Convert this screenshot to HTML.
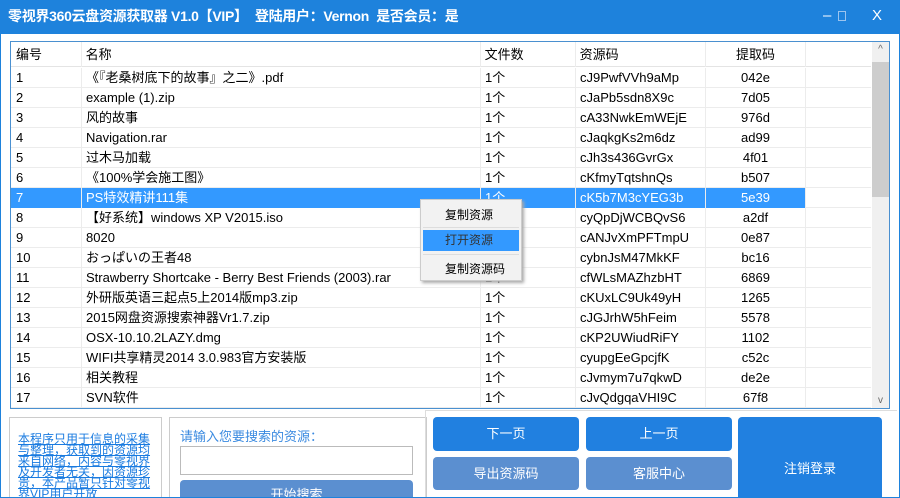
<!DOCTYPE html>
<html><head><meta charset="utf-8"><style>
*{margin:0;padding:0;box-sizing:border-box}
html,body{width:900px;height:498px;overflow:hidden}
body{background:#fff;font-family:"Liberation Sans","Noto Sans CJK SC",sans-serif;position:relative}
.title{position:absolute;left:0;top:0;width:900px;height:34px;background:#1e82dc;color:#fff;font-size:14px;font-weight:bold;line-height:32px;padding-left:8px;letter-spacing:-0.3px}
.wb{position:absolute;top:0;width:900px;height:498px;border:1px solid #1e82dc;border-top:none;pointer-events:none;left:0}
.ctl{position:absolute;top:0;color:#fff;font-size:15px;line-height:32px}
.grid{position:absolute;left:10px;top:41px;width:880px;height:368px;border:1px solid #4a90d0;overflow:hidden}
.row{position:absolute;left:0;height:20px;width:860px;border-bottom:1px solid #ececec;font-size:13px;line-height:20px;color:#000}
.row span{position:absolute;top:0;height:20px;white-space:nowrap;overflow:hidden}
.row .vl{border-left:1px solid #ececec}
.btn{position:absolute;border-radius:4px;color:#fff;font-size:13px;text-align:center}
.b1{background:#2180e0}.b2{background:#5b8fd0}
</style></head><body>
<div class="title">零视界360云盘资源获取器 V1.0【VIP】 &nbsp;登陆用户：Vernon &nbsp;是否会员：是</div>
<div class="ctl" style="left:823px">–</div>
<div style="position:absolute;left:838px;top:11px;width:8px;height:10px;border:1px solid #9cc4ee"></div>
<div class="ctl" style="left:872px">X</div>
<div class="grid">
<div class="row" style="top:0;height:25px;line-height:25px;border-bottom:1px solid #e4e4e4;background:#fff">
<span style="left:5px">编号</span><span style="left:70px;height:25px" class="vl">&nbsp;名称</span><span class="vl" style="left:469px;height:25px">&nbsp;文件数</span><span class="vl" style="left:564px;height:25px">&nbsp;资源码</span><span class="vl" style="left:694px;width:100px;text-align:center;height:25px">提取码</span><span class="vl" style="left:794px;height:25px;width:66px"></span></div>
<div id="rows"></div>
<div style="position:absolute;left:861px;top:0;width:17px;height:366px;background:#f0f0f0">
<div style="position:absolute;left:0;top:20px;width:17px;height:135px;background:#cdcdcd"></div>
<div style="position:absolute;top:2px;width:17px;text-align:center;font-size:10px;color:#666">^</div>
<div style="position:absolute;bottom:2px;width:17px;text-align:center;font-size:10px;color:#666">v</div></div>
</div>
<div style="position:absolute;left:420px;top:199px;width:102px;height:82px;background:#f2f2f2;border:1px solid #ccc;box-shadow:2px 2px 3px #aaa;font-size:12px">
<div style="position:absolute;left:24px;top:6px">复制资源</div>
<div style="position:absolute;left:2px;top:27px;width:96px;border-top:1px solid #ddd"></div>
<div style="position:absolute;left:2px;top:30px;width:96px;height:21px;background:#3399ff;color:#333;padding-left:22px;line-height:21px">打开资源</div>
<div style="position:absolute;left:2px;top:54px;width:96px;border-top:1px solid #ddd"></div>
<div style="position:absolute;left:24px;top:60px">复制资源码</div></div>
<div style="position:absolute;left:9px;top:417px;width:153px;height:90px;border:1px solid #ccc;background:#fff">
<div style="position:absolute;left:8px;top:16px;width:140px;font-size:12px;line-height:11px;color:#1a7be0;text-decoration:underline">本程序只用于信息的采集与整理，获取到的资源均来自网络，内容与零视界及开发者无关，因资源珍贵，本产品暂只针对零视界VIP用户开放</div></div>
<div style="position:absolute;left:169px;top:417px;width:258px;height:90px;border:1px solid #ccc;background:#fff">
<div style="position:absolute;left:10px;top:8px;font-size:13px;color:#3a8ae0">请输入您要搜索的资源：</div>
<div style="position:absolute;left:10px;top:28px;width:233px;height:29px;border:1px solid #bbb"></div>
<div class="btn b2" style="left:10px;top:62px;width:233px;height:30px;line-height:30px">开始搜索</div></div>
<div style="position:absolute;left:425px;top:410px;width:472px;height:90px;border:1px solid #ddd;border-right:none"></div>
<div class="btn b1" style="left:433px;top:417px;width:146px;height:34px;line-height:34px">下一页</div>
<div class="btn b1" style="left:586px;top:417px;width:146px;height:34px;line-height:34px">上一页</div>
<div class="btn b2" style="left:433px;top:457px;width:146px;height:33px;line-height:33px">导出资源码</div>
<div class="btn b2" style="left:586px;top:457px;width:146px;height:33px;line-height:33px">客服中心</div>
<div class="btn b1" style="left:738px;top:417px;width:144px;height:90px;line-height:104px">注销登录</div>
<div class="wb"></div>
<script>
var d=[["1","《『老桑树底下的故事』之二》.pdf","cJ9PwfVVh9aMp","042e"],["2","example (1).zip","cJaPb5sdn8X9c","7d05"],["3","风的故事","cA33NwkEmWEjE","976d"],["4","Navigation.rar","cJaqkgKs2m6dz","ad99"],["5","过木马加载","cJh3s436GvrGx","4f01"],["6","《100%学会施工图》","cKfmyTqtshnQs","b507"],["7","PS特效精讲111集","cK5b7M3cYEG3b","5e39"],["8","【好系统】windows XP V2015.iso","cyQpDjWCBQvS6","a2df"],["9","8020","cANJvXmPFTmpU","0e87"],["10","おっぱいの王者48","cybnJsM47MkKF","bc16"],["11","Strawberry Shortcake - Berry Best Friends (2003).rar","cfWLsMAZhzbHT","6869"],["12","外研版英语三起点5上2014版mp3.zip","cKUxLC9Uk49yH","1265"],["13","2015网盘资源搜索神器Vr1.7.zip","cJGJrhW5hFeim","5578"],["14","OSX-10.10.2LAZY.dmg","cKP2UWiudRiFY","1102"],["15","WIFI共享精灵2014 3.0.983官方安装版","cyupgEeGpcjfK","c52c"],["16","相关教程","cJvmym7u7qkwD","de2e"],["17","SVN软件","cJvQdgqaVHI9C","67f8"]];
var h="";d.forEach(function(r,i){var s=i==6;h+='<div class="row" style="top:'+(26+i*20)+'px"><span style="left:0;width:794px;'+(s?'background:#3399ff;':'')+'"></span><span style="left:5px;'+(s?'color:#fff':'')+'">'+r[0]+'</span><span class="vl" style="left:70px;width:399px;padding-left:4px;'+(s?'color:#fff':'')+'">'+r[1]+'</span><span class="vl" style="left:469px;padding-left:4px;width:95px;'+(s?'color:#fff':'')+'">1个</span><span class="vl" style="left:564px;width:130px;padding-left:4px;'+(s?'color:#fff':'')+'">'+r[2]+'</span><span class="vl" style="left:694px;width:100px;text-align:center;'+(s?'color:#fff':'')+'">'+r[3]+'</span><span class="vl" style="left:794px;width:66px"></span></div>'});
document.getElementById("rows").innerHTML=h;
</script>
</body></html>
